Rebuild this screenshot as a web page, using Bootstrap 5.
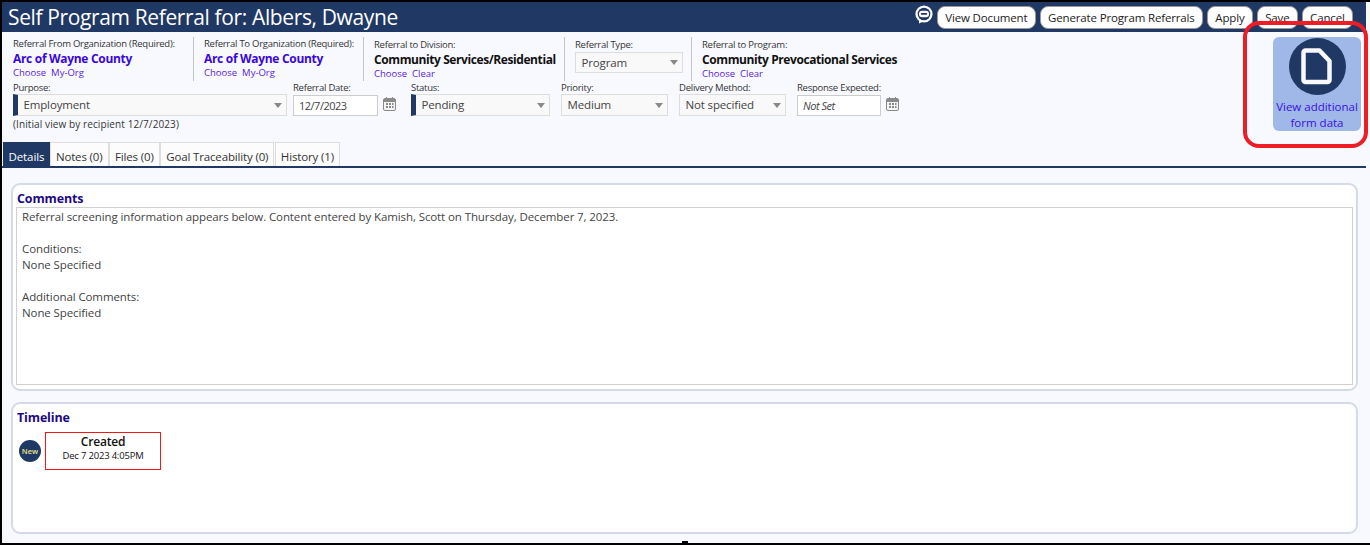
<!DOCTYPE html>
<html lang="en">
<head>
<meta charset="UTF-8">
<title>Self Program Referral</title>
<link rel="stylesheet" href="https://cdn.jsdelivr.net/npm/bootstrap@5.3.0/dist/css/bootstrap.min.css">
<style>
html, body { height: 100%; overflow: hidden; }
body { background: #000; font-family: "Open Sans", "Noto Sans", sans-serif; font-size: 12px; color: #222; }
.app-frame { position: relative; width: 1368px; height: 541px; margin: 2px 0 0 2px; background: #f8f9ff; }
.title-bar { height: 30px; margin-right: 4px; background: #1f3864; padding: 0 13px 0 6px; }
.title-text { font-size: 21px; line-height: 30px; color: #fff; letter-spacing: -.37px; }
.hdr-btn { height: 23px; padding: 0 7.3px; border: 1px solid #999; border-radius: 8px; background: #fff; color: #222; font-size: 11.5px; line-height: 21px; white-space: nowrap; letter-spacing: -.15px; }
.chat-icon { margin: -6px 4px 0 0; flex: none; }
.form-area { height: 109px; padding: 5px 0 0 11px; }
.top-row { height: 44px; }
.org-cell { border-right: 1px solid #c4c4c4; height: 44px; flex: none; padding-top: 1px; }
.cell-from { width: 181px; }
.cell-to { width: 160px; margin-left: 10px; }
.cell-div { width: 191px; margin-left: 10px; padding-top: 2px; }
.cell-type { width: 117px; margin-left: 10px; padding-top: 2px; }
.cell-prog { margin-left: 10px; padding-top: 2px; }
.field-lbl { font-size: 9.5px; line-height: 12px; color: #333; white-space: nowrap; letter-spacing: -.25px; }
.org-name { font-size: 12px; font-weight: 700; line-height: 17px; color: #3a06e0; white-space: nowrap; letter-spacing: -.31px; }
.org-name.dark { color: #111; letter-spacing: -.41px; }
.pick-links { font-size: 9.5px; line-height: 12px; color: #5a1be0; white-space: nowrap; }
.pick-links span { margin-right: 5px; }
.mid-row { margin-top: 1px; }
.fake-select { height: 22px; background: #f9f9f9; border: 1px solid #ddd; font-size: 11.5px; line-height: 20px; padding-left: 5.5px; color: #444; display: flex; align-items: center; justify-content: space-between; letter-spacing: -.15px; }
.fake-select i { border-left: 4px solid transparent; border-right: 4px solid transparent; border-top: 5px solid #888; margin-right: 4px; }
.need-bar { border-left: 5px solid #1f3864; }
.date-box { height: 21px; margin-top: 1px; background: #fff; border: 1px solid #ccc; font-size: 11px; line-height: 19px; padding-left: 5px; color: #444; letter-spacing: -.5px; }
.w-purpose { width: 274px; }
.w-date { width: 85px; margin-left: 6px; }
.w-status { width: 139px; margin-left: 15px; }
.w-prio { width: 107px; margin-left: 11px; }
.w-deliv { width: 107px; margin-left: 11px; }
.w-resp { width: 84px; margin-left: 11px; }
.w-type { width: 108px; height: 21px; margin-top: 1px; }
.cal-icon { margin: 15px 0 0 5px; flex: none; }
.note-line { font-size: 10px; line-height: 14px; margin-top: 1px; color: #333; letter-spacing: .1px; }
.tab-strip { height: 25px; margin-right: 4px; padding-left: 1px; border-bottom: 2px solid #1f3864; box-sizing: content-box; }
.tab-item { height: 24px; padding: 2px 5px 0; margin-right: .5px; background: #fcfcfc; border: 1px solid #ddd; border-bottom: 0; font-size: 11.5px; line-height: 24px; color: #333; white-space: nowrap; letter-spacing: -.15px; }
.tab-item.on { background: #1f3864; border-color: #1f3864; color: #fff; padding: 2px 4.5px 0; margin-right: 0; letter-spacing: -.1px; }
.panel-box { background: #fff; border: 2px solid #d5dbe6; border-radius: 9px; margin: 0 12px 0 9px; padding: 5px 3px 3px 3px; }
.panel-comments { height: 208px; margin-top: 15px; }
.panel-timeline { height: 132px; margin-top: 11px; }
.panel-head { height: 17px; font-size: 12.5px; font-weight: 700; line-height: 17px; color: #1c0a80; padding-left: 1px; letter-spacing: -.15px; }
.comment-text { height: 178px; border: 1px solid #d0d0d0; padding: 1px 5px; font-size: 11.5px; line-height: 16px; color: #444; letter-spacing: -.1px; }
.event-row { margin-top: 6px; }
.new-dot { width: 22px; height: 22px; border-radius: 50%; background: #1f3864; color: #e8e48c; font-size: 7.5px; font-weight: 600; line-height: 22px; text-align: center; flex: none; margin: 8px 4px 0 3px; }
.event-box { width: 116px; height: 38px; border: 1px solid #f01818; text-align: center; padding-top: 1px; color: #111; }
.event-name { font-size: 12px; line-height: 15px; font-weight: 600; letter-spacing: -.2px; }
.event-time { font-size: 9.5px; line-height: 13px; letter-spacing: -.2px; }
.form-tile { position: absolute; left: 1271px; top: 35px; width: 88px; height: 94px; background: #9fb8e8; border-radius: 6px; text-align: center; color: #3a10e0; font-size: 11.5px; line-height: 16px; }
.form-tile svg { display: block; margin: 1px auto 4px; }
.red-ring { position: absolute; left: 1241px; top: 19px; width: 125px; height: 127px; border: 4px solid #ee1c25; border-radius: 16px; pointer-events: none; }
.edge-tick { position: absolute; left: 680px; bottom: 0; width: 6px; height: 2px; background: #000; }
</style>
</head>
<body>
<div class="app-frame">
  <div class="title-bar d-flex align-items-center">
    <div class="title-text flex-grow-1">Self Program Referral for: Albers, Dwayne</div>
    <svg class="chat-icon" width="18" height="19" viewBox="0 0 18 19"><circle cx="9" cy="9" r="8.6" fill="#fff"/><path d="M4 15l3 2-3 1.500z" fill="#fff"/><circle cx="9" cy="9" r="6.300" fill="#1f3864"/><rect x="4" y="5.800" width="10" height="6.400" rx="3" fill="#fff"/><rect x="5.800" y="8" width="6.400" height="1.800" rx=".9" fill="#1f3864"/></svg>
    <div class="d-flex gap-1">
      <div class="hdr-btn">View Document</div>
      <div class="hdr-btn">Generate Program Referrals</div>
      <div class="hdr-btn">Apply</div>
      <div class="hdr-btn">Save</div>
      <div class="hdr-btn">Cancel</div>
    </div>
  </div>

  <div class="form-area">
    <div class="top-row d-flex">
      <div class="org-cell cell-from">
        <div class="field-lbl">Referral From Organization (Required):</div>
        <div class="org-name">Arc of Wayne County</div>
        <div class="pick-links"><span>Choose</span><span>My-Org</span></div>
      </div>
      <div class="org-cell cell-to">
        <div class="field-lbl">Referral To Organization (Required):</div>
        <div class="org-name">Arc of Wayne County</div>
        <div class="pick-links"><span>Choose</span><span>My-Org</span></div>
      </div>
      <div class="org-cell cell-div">
        <div class="field-lbl">Referral to Division:</div>
        <div class="org-name dark">Community Services/Residential</div>
        <div class="pick-links"><span>Choose</span><span>Clear</span></div>
      </div>
      <div class="org-cell cell-type">
        <div class="field-lbl">Referral Type:</div>
        <div class="fake-select w-type"><span>Program</span><i></i></div>
      </div>
      <div class="cell-prog">
        <div class="field-lbl">Referral to Program:</div>
        <div class="org-name dark">Community Prevocational Services</div>
        <div class="pick-links"><span>Choose</span><span>Clear</span></div>
      </div>
    </div>

    <div class="mid-row d-flex">
      <div class="w-purpose"><div class="field-lbl">Purpose:</div><div class="fake-select need-bar"><span>Employment</span><i></i></div></div>
      <div class="w-date"><div class="field-lbl">Referral Date:</div><div class="date-box">12/7/2023</div></div>
      <svg class="cal-icon" width="13" height="14" viewBox="0 0 13 14"><rect x=".5" y="1.500" width="12" height="12" rx="1.500" fill="#f4f4f4" stroke="#8a8a8a"/><path d="M1 2h11v3H1z" fill="#8a8a8a"/><path d="M3.500 0v3M9.500 0v3" stroke="#8a8a8a"/><path d="M3 6h2v2H3zM6 6h2v2H6zM9 6h1.500v2H9zM3 9h2v2H3zM6 9h2v2H6zM9 9h1.500v2H9z" fill="#8a8a8a"/></svg>
      <div class="w-status"><div class="field-lbl">Status:</div><div class="fake-select need-bar"><span>Pending</span><i></i></div></div>
      <div class="w-prio"><div class="field-lbl">Priority:</div><div class="fake-select"><span>Medium</span><i></i></div></div>
      <div class="w-deliv"><div class="field-lbl">Delivery Method:</div><div class="fake-select"><span>Not specified</span><i></i></div></div>
      <div class="w-resp"><div class="field-lbl">Response Expected:</div><div class="date-box fst-italic">Not Set</div></div>
      <svg class="cal-icon" width="13" height="14" viewBox="0 0 13 14"><rect x=".5" y="1.500" width="12" height="12" rx="1.500" fill="#f4f4f4" stroke="#8a8a8a"/><path d="M1 2h11v3H1z" fill="#8a8a8a"/><path d="M3.500 0v3M9.500 0v3" stroke="#8a8a8a"/><path d="M3 6h2v2H3zM6 6h2v2H6zM9 6h1.500v2H9zM3 9h2v2H3zM6 9h2v2H6zM9 9h1.500v2H9z" fill="#8a8a8a"/></svg>
    </div>
    <div class="note-line">(Initial view by recipient 12/7/2023)</div>
  </div>

  <div class="tab-strip d-flex align-items-end">
    <div class="tab-item on">Details</div>
    <div class="tab-item">Notes (0)</div>
    <div class="tab-item">Files (0)</div>
    <div class="tab-item">Goal Traceability (0)</div>
    <div class="tab-item">History (1)</div>
  </div>

  <div class="panel-box panel-comments">
    <div class="panel-head">Comments</div>
    <div class="comment-text">
      Referral screening information appears below. Content entered by Kamish, Scott on Thursday, December 7, 2023.<br><br>
      Conditions:<br>None Specified<br><br>
      Additional Comments:<br>None Specified
    </div>
  </div>

  <div class="panel-box panel-timeline">
    <div class="panel-head">Timeline</div>
    <div class="d-flex event-row">
      <div class="new-dot">New</div>
      <div class="event-box">
        <div class="event-name">Created</div>
        <div class="event-time">Dec 7 2023 4:05PM</div>
      </div>
    </div>
  </div>

  <div class="form-tile">
    <svg width="57" height="57" viewBox="0 0 57 57"><circle cx="28.500" cy="28.500" r="28.500" fill="#1f3864"/><path d="M16.500 12.500h14l10 10.500v19a2 2 0 0 1-2 2h-22a2 2 0 0 1-2-2v-27.500a2 2 0 0 1 2-2z" fill="none" stroke="#f8f9ff" stroke-width="4.500" stroke-linejoin="round"/></svg>
    View additional<br>form data
  </div>
  <div class="red-ring"></div>
  <div class="edge-tick"></div>
</div>
<script src="https://cdn.jsdelivr.net/npm/bootstrap@5.3.0/dist/js/bootstrap.bundle.min.js"></script>
</body>
</html>
